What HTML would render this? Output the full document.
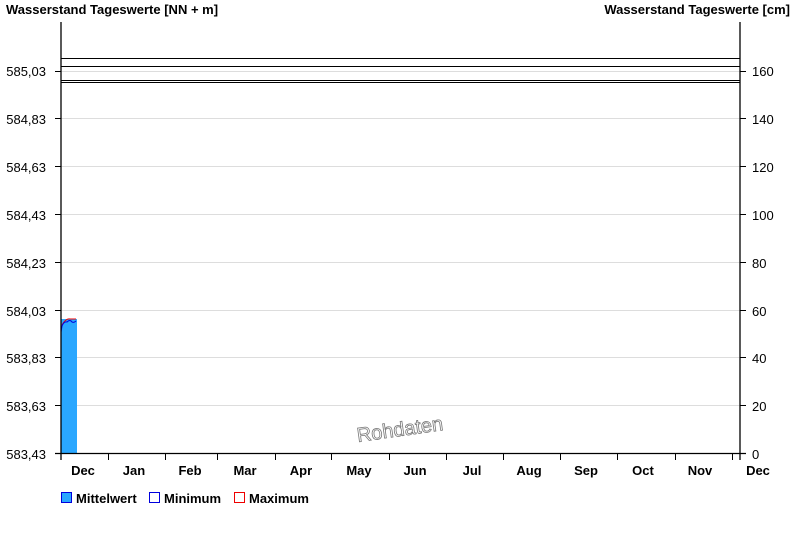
<!DOCTYPE html>
<html><head><style>body{margin:0;background:#fff}svg{display:block;font-family:"Liberation Sans",Arial,sans-serif}</style></head><body>
<svg width="800" height="550" xmlns="http://www.w3.org/2000/svg">
<rect width="800" height="550" fill="#fff"/>
<g font-size="13" font-weight="bold" fill="#000">
<text x="6" y="14">Wasserstand Tageswerte [NN + m]</text>
<text x="790" y="14" text-anchor="end">Wasserstand Tageswerte [cm]</text>
</g>
<g stroke="#ddd" stroke-width="1">
<line x1="61" x2="740" y1="71.5" y2="71.5"/><line x1="61" x2="740" y1="118.5" y2="118.5"/><line x1="61" x2="740" y1="166.5" y2="166.5"/><line x1="61" x2="740" y1="214.5" y2="214.5"/><line x1="61" x2="740" y1="262.5" y2="262.5"/><line x1="61" x2="740" y1="310.5" y2="310.5"/><line x1="61" x2="740" y1="357.5" y2="357.5"/><line x1="61" x2="740" y1="405.5" y2="405.5"/>
</g>
<g stroke="#000" stroke-width="1">
<line x1="61" x2="740" y1="58.5" y2="58.5"/><line x1="61" x2="740" y1="66.5" y2="66.5"/><line x1="61" x2="740" y1="80.5" y2="80.5"/><line x1="61" x2="740" y1="82.5" y2="82.5"/>
</g>
<rect x="61" y="319" width="16" height="134" fill="#2aa7ff"/>
<path d="M62 325 Q66 318 70 319 L76 319" stroke="#e00" fill="none"/>
<path d="M61 332 L62 326 Q64 321 67 322 Q70 319 72 322 Q74 323 76 321" stroke="#00d" fill="none"/>
<g stroke="#000" stroke-width="1.3">
<line x1="61" x2="61" y1="22" y2="460"/><line x1="740" x2="740" y1="22" y2="460"/>
<line x1="55" x2="746" y1="453.5" y2="453.5"/>
</g>
<g stroke="#000">
<line x1="55" x2="61" y1="71.5" y2="71.5"/><line x1="55" x2="61" y1="118.5" y2="118.5"/><line x1="55" x2="61" y1="166.5" y2="166.5"/><line x1="55" x2="61" y1="214.5" y2="214.5"/><line x1="55" x2="61" y1="262.5" y2="262.5"/><line x1="55" x2="61" y1="310.5" y2="310.5"/><line x1="55" x2="61" y1="357.5" y2="357.5"/><line x1="55" x2="61" y1="405.5" y2="405.5"/>
<line x1="740" x2="746" y1="71.5" y2="71.5"/><line x1="740" x2="746" y1="118.5" y2="118.5"/><line x1="740" x2="746" y1="166.5" y2="166.5"/><line x1="740" x2="746" y1="214.5" y2="214.5"/><line x1="740" x2="746" y1="262.5" y2="262.5"/><line x1="740" x2="746" y1="310.5" y2="310.5"/><line x1="740" x2="746" y1="357.5" y2="357.5"/><line x1="740" x2="746" y1="405.5" y2="405.5"/>
<line x1="108.5" x2="108.5" y1="453" y2="460"/><line x1="165.5" x2="165.5" y1="453" y2="460"/><line x1="217.5" x2="217.5" y1="453" y2="460"/><line x1="275.5" x2="275.5" y1="453" y2="460"/><line x1="331.5" x2="331.5" y1="453" y2="460"/><line x1="389.5" x2="389.5" y1="453" y2="460"/><line x1="446.5" x2="446.5" y1="453" y2="460"/><line x1="503.5" x2="503.5" y1="453" y2="460"/><line x1="560.5" x2="560.5" y1="453" y2="460"/><line x1="617.5" x2="617.5" y1="453" y2="460"/><line x1="675.5" x2="675.5" y1="453" y2="460"/><line x1="732.5" x2="732.5" y1="453" y2="460"/>
</g>
<g font-size="13" fill="#000" text-anchor="end">
<text x="46" y="76">585,03</text><text x="46" y="124">584,83</text><text x="46" y="172">584,63</text><text x="46" y="220">584,43</text><text x="46" y="268">584,23</text><text x="46" y="316">584,03</text><text x="46" y="363">583,83</text><text x="46" y="411">583,63</text><text x="46" y="459">583,43</text>
</g>
<g font-size="13" fill="#000">
<text x="752" y="76">160</text><text x="752" y="124">140</text><text x="752" y="172">120</text><text x="752" y="220">100</text><text x="752" y="268">80</text><text x="752" y="316">60</text><text x="752" y="363">40</text><text x="752" y="411">20</text><text x="752" y="459">0</text>
</g>
<g font-size="13" font-weight="bold" fill="#000" text-anchor="middle">
<text x="83" y="475">Dec</text><text x="134" y="475">Jan</text><text x="190" y="475">Feb</text><text x="245" y="475">Mar</text><text x="301" y="475">Apr</text><text x="359" y="475">May</text><text x="415" y="475">Jun</text><text x="472" y="475">Jul</text><text x="529" y="475">Aug</text><text x="586" y="475">Sep</text><text x="643" y="475">Oct</text><text x="700" y="475">Nov</text><text x="758" y="475">Dec</text>
</g>
<text x="400" y="436" font-size="20" fill="#fff" stroke="#777" stroke-width="0.8" text-anchor="middle" transform="rotate(-8 400 430)">Rohdaten</text>
<g font-size="13" font-weight="bold" fill="#000">
<rect x="61.5" y="492.5" width="10" height="10" fill="#2aa7ff" stroke="#00d"/><text x="76" y="503">Mittelwert</text>
<rect x="149.5" y="492.5" width="10" height="10" fill="#fff" stroke="#00d"/><text x="164" y="503">Minimum</text>
<rect x="234.5" y="492.5" width="10" height="10" fill="#fff" stroke="#e00"/><text x="249" y="503">Maximum</text>
</g>
</svg>
</body></html>
